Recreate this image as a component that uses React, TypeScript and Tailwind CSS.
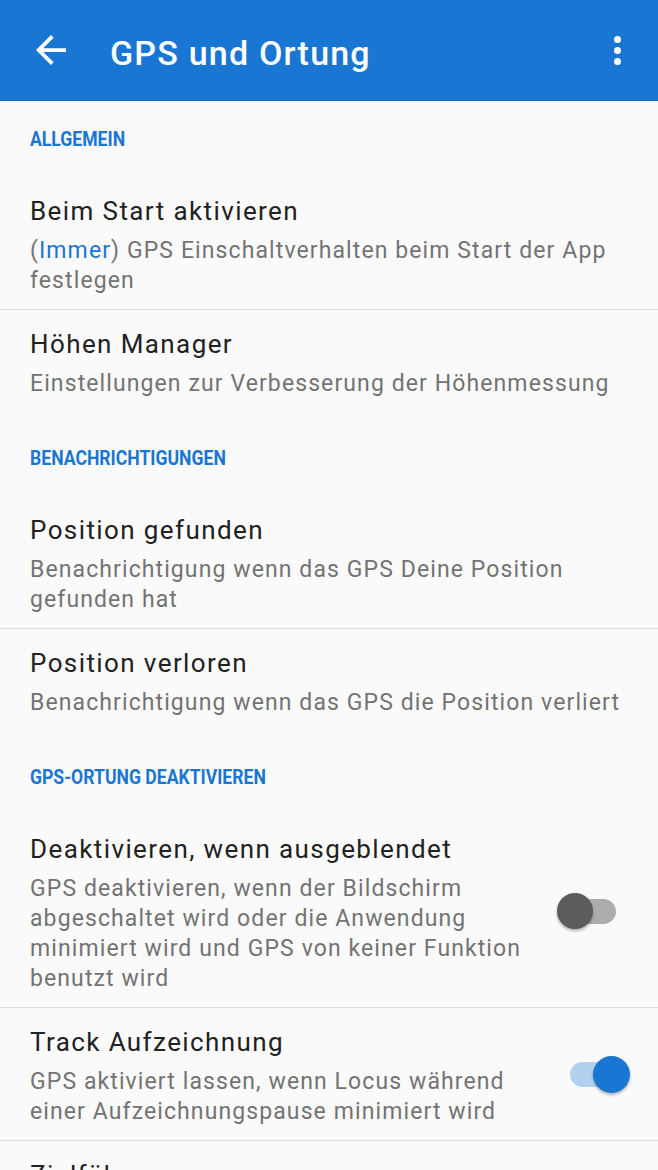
import React from 'react'

const font = { fontFamily: 'Roboto, "Noto Sans", sans-serif' }

function Section({ label, first }: { label: string; first?: boolean }) {
  return (
    <div className={`px-[30px] ${first ? 'pt-[26px]' : 'pt-[34px]'} pb-[24px]`}>
      <div className="inline-block origin-left scale-x-[0.88] text-[20px] leading-[24px] font-bold text-[#1976d2] whitespace-nowrap">
        {label}
      </div>
    </div>
  )
}

function Item({
  title,
  children,
  divider,
  right,
}: {
  title: string
  children: React.ReactNode
  divider?: boolean
  right?: React.ReactNode
}) {
  return (
    <div className={divider ? 'border-b border-[#dadada]' : ''}>
      <div className="flex items-center">
        <div className={`flex-1 pl-[30px] ${right ? 'pr-0' : 'pr-[24px]'} pt-[17px] pb-[13px] min-w-0`}>
          <div className="text-[26px] leading-[34px] tracking-[1.4px] text-[#212121]">{title}</div>
          <div className="mt-2 text-[23px] leading-[30px] tracking-[1.1px] text-[#737373]">{children}</div>
        </div>
        {right}
      </div>
    </div>
  )
}

function Toggle({ on }: { on: boolean }) {
  if (on) {
    return (
      <div className="w-[116px] shrink-0 flex justify-end pr-[28px]">
        <div className="relative shrink-0 w-[60px] h-[37px]">
          <div className="absolute left-0 top-[6px] w-[52px] h-[25px] rounded-full bg-[#b2d1f0]" />
          <div className="absolute right-0 top-0 w-[37px] h-[37px] rounded-full bg-[#1976d2] shadow-[0_2px_3px_rgba(0,0,0,0.3)]" />
        </div>
      </div>
    )
  }
  return (
    <div className="w-[116px] shrink-0 flex justify-end pr-[42px]">
      <div className="relative shrink-0 w-[59px] h-[37px]">
        <div className="absolute right-0 top-[6px] w-[52px] h-[25px] rounded-full bg-[#adadad]" />
        <div className="absolute left-0 top-0 w-[36px] h-[36px] rounded-full bg-[#5c5c5c] shadow-[0_2px_3px_rgba(0,0,0,0.3)]" />
      </div>
    </div>
  )
}

export default function App() {
  return (
    <div className="w-[658px] h-[1170px] overflow-hidden bg-[#fafafa]" style={font}>
      <div className="h-[101px] bg-[#1976d2] border-b border-[#1565c0] flex items-center">
        <div className="w-[110px] pl-[36px] flex items-center">
          <svg width="30" height="30" viewBox="4 4 16 16" fill="#ffffff">
            <path d="M20 11H7.83l5.59-5.59L12 4l-8 8 8 8 1.41-1.41L7.83 13H20v-2z" />
          </svg>
        </div>
        <div className="flex-1 mt-[5px] text-white text-[34px] leading-[40px] font-medium tracking-[1.2px]">
          GPS und Ortung
        </div>
        <div className="pr-[37px] flex flex-col items-center gap-[4px]">
          <div className="w-[7px] h-[7px] rounded-full bg-white" />
          <div className="w-[7px] h-[7px] rounded-full bg-white" />
          <div className="w-[7px] h-[7px] rounded-full bg-white" />
        </div>
      </div>

      <Section label="ALLGEMEIN" first />
      <Item title="Beim Start aktivieren" divider>
        (<span className="text-[#1976d2]">Immer</span>) GPS Einschaltverhalten beim Start der App festlegen
      </Item>
      <Item title="Höhen Manager">Einstellungen zur Verbesserung der Höhenmessung</Item>

      <Section label="BENACHRICHTIGUNGEN" />
      <Item title="Position gefunden" divider>
        Benachrichtigung wenn das GPS Deine Position gefunden hat
      </Item>
      <Item title="Position verloren">Benachrichtigung wenn das GPS die Position verliert</Item>

      <Section label="GPS-ORTUNG DEAKTIVIEREN" />
      <Item title="Deaktivieren, wenn ausgeblendet" divider right={<Toggle on={false} />}>
        GPS deaktivieren, wenn der Bildschirm abgeschaltet wird oder die Anwendung minimiert wird und GPS von keiner
        Funktion benutzt wird
      </Item>
      <Item title="Track Aufzeichnung" divider right={<Toggle on />}>
        GPS aktiviert lassen, wenn Locus während einer Aufzeichnungspause minimiert wird
      </Item>
      <Item title="Zielführung">Einstellungen für die Zielführung</Item>
    </div>
  )
}
